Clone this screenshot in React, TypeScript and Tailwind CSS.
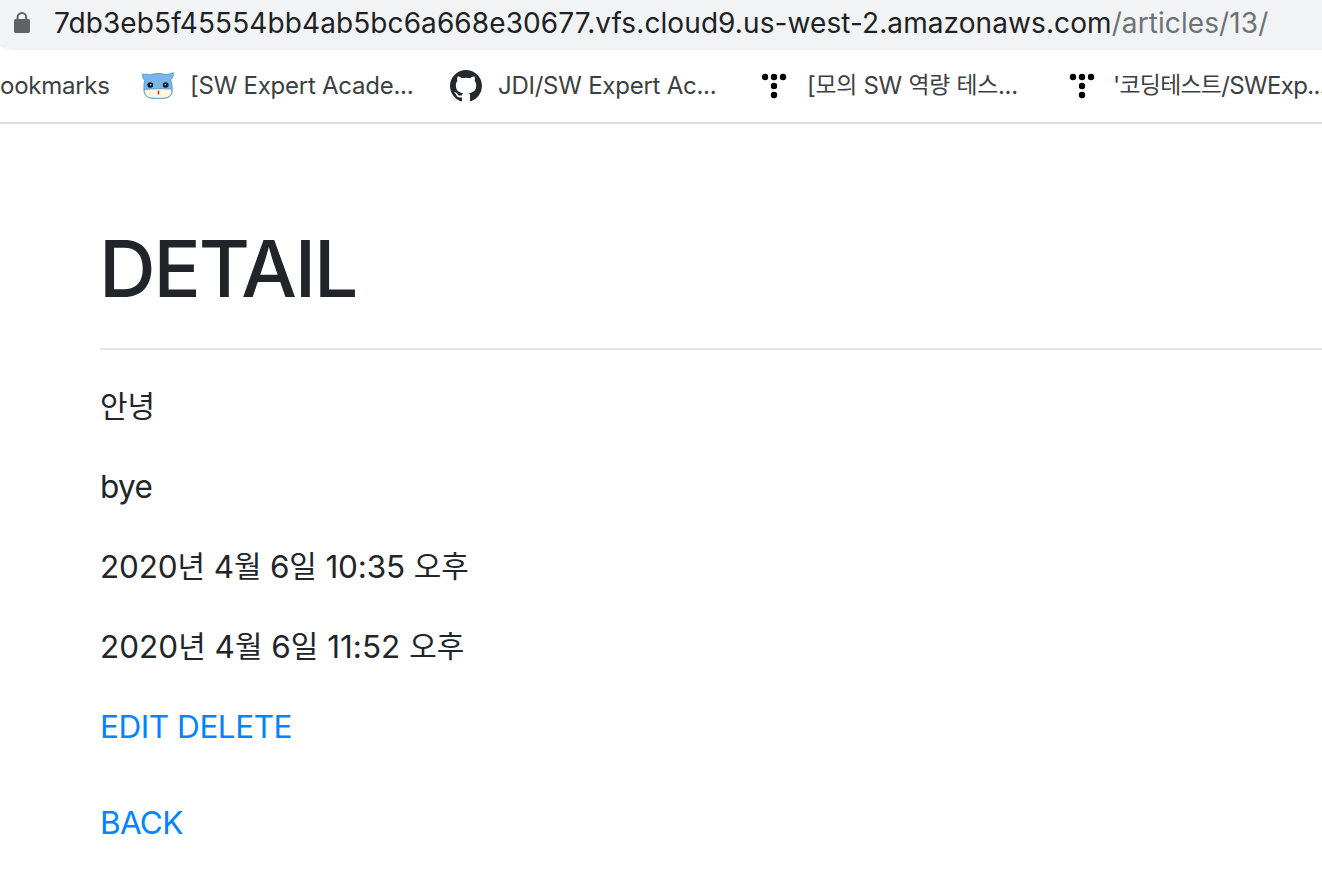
import type { ReactNode } from 'react';

function LockIcon() {
  return (
    <svg width="18" height="24" viewBox="0 0 18 24" className="shrink-0">
      <path d="M4.600 10V6.300a4.300 4.300 0 0 1 8.600 0V10" fill="none" stroke="#606164" strokeWidth="2" />
      <rect x="1" y="8" width="16" height="14" rx="1.8" fill="#606164" />
    </svg>
  );
}

function MascotIcon() {
  return (
    <svg width="32" height="28" viewBox="0 0 32 30" preserveAspectRatio="none" className="shrink-0">
      <path
        d="M.6 2.4C3 2.6 6 2.1 8 3.2c5-1.9 11-1.9 16-.3 2.300-.6 5-.9 7.200-2.200.5 3.200-.3 5.800-2.600 7.600 1.400 3.500 1.800 8 1.400 12.500-.4 5-4 7-8.500 7.300-4 .3-8 .3-12-.2-4.500-.6-7-3.400-7.400-8-.3-3.800-.2-7.600.7-11C.7 7.400.4 5 .6 2.400Z"
        fill="#78b7ea"
        stroke="#559bd8"
        strokeWidth="1"
      />
      <path
        d="M2.100 18.700c8.500-1 18.500-1 27.800-.5.400 6-2 9.300-8.400 9.900-4 .3-8 .3-12-.2-5-.6-7.500-4-7.400-9.200Z"
        fill="#fff8dc"
        stroke="#559bd8"
        strokeWidth="1"
      />
      <circle cx="8.300" cy="13.900" r="2.900" fill="#15161a" />
      <circle cx="23.700" cy="13.900" r="2.900" fill="#15161a" />
      <circle cx="8.700" cy="13.700" r=".8" fill="#fff" />
      <circle cx="23.400" cy="13.700" r=".8" fill="#fff" />
      <path d="M16.500 20v4" stroke="#d9232b" strokeWidth="1.500" />
    </svg>
  );
}

function GithubIcon() {
  return (
    <svg width="32" height="32" viewBox="0 0 16 16" className="shrink-0" fill="#24292e">
      <path d="M8 0C3.58 0 0 3.58 0 8c0 3.54 2.29 6.53 5.47 7.59.4.07.55-.17.55-.38 0-.19-.01-.82-.01-1.49-2.01.37-2.53-.49-2.69-.94-.09-.23-.48-.94-.82-1.13-.28-.15-.68-.52-.01-.53.63-.01 1.08.58 1.23.82.72 1.21 1.87.87 2.33.66.07-.52.28-.87.51-1.07-1.78-.2-3.64-.89-3.64-3.95 0-.87.31-1.59.82-2.15-.08-.2-.36-1.02.08-2.12 0 0 .67-.21 2.2.82.64-.18 1.32-.27 2-.27s1.36.09 2 .27c1.53-1.04 2.2-.82 2.2-.82.44 1.1.16 1.92.08 2.12.51.56.82 1.27.82 2.15 0 3.07-1.87 3.75-3.65 3.95.29.25.54.73.54 1.48 0 1.07-.01 1.93-.01 2.2 0 .21.15.46.55.38A8.01 8.01 0 0 0 16 8c0-4.42-3.58-8-8-8Z" />
    </svg>
  );
}

function DotsIcon() {
  return (
    <svg width="26" height="26" viewBox="0 0 26 26" className="shrink-0" fill="#000">
      <circle cx="4" cy="4" r="3.200" />
      <circle cx="13" cy="4" r="3.200" />
      <circle cx="22" cy="4" r="3.200" />
      <circle cx="13" cy="13" r="3.200" />
      <circle cx="13" cy="22" r="3.200" />
    </svg>
  );
}

/* Sets Hangul runs slightly smaller than the Latin text around them. */
function Mixed({ text }: { text: string }) {
  return (
    <span>
      {text.split(/([가-힣]+)/).map((part, i) =>
        i % 2 ? (
          <span key={i} className="align-[0.03em] text-[0.95em] leading-none">
            {part}
          </span>
        ) : (
          part
        ),
      )}
    </span>
  );
}

function Bookmark({ icon, className, title }: { icon: ReactNode; className: string; title: string }) {
  return (
    <a className={`flex shrink-0 items-center ${className}`}>
      {icon}
      <Mixed text={title} />
    </a>
  );
}

export default function App() {
  return (
    <div className="h-[886px] w-[1322px] overflow-hidden bg-white font-['Inter','Noto_Sans_CJK_KR',sans-serif] text-[#212529]">
      <header className="h-[124px] border-b-2 border-[#dadce0]">
        <div className="-ml-[11px] flex h-[50px] items-center rounded-bl-[25px] bg-[#f1f3f4] pb-1 pl-6 text-[28px] leading-8 tracking-[0.09px] whitespace-nowrap">
          <LockIcon />
          <span className="ml-[23px] text-[#202124]">7db3eb5f45554bb4ab5bc6a668e30677.vfs.cloud9.us-west-2.amazonaws.com</span>
          <span className="text-[#6f7275]">/articles/13/</span>
        </div>
        <nav className="flex h-[72px] items-center text-2xl tracking-[-0.25px] whitespace-nowrap text-[#3c4043]">
          <span className="w-[142px] shrink-0">ookmarks</span>
          <Bookmark icon={<MascotIcon />} className="w-[308px] gap-4" title="[SW Expert Acade..." />
          <Bookmark icon={<GithubIcon />} className="w-[311px] gap-4" title="JDI/SW Expert Ac..." />
          <Bookmark icon={<DotsIcon />} className="w-[308px] gap-5" title="[모의 SW 역량 테스..." />
          <Bookmark icon={<DotsIcon />} className="gap-[18px] tracking-[-0.65px]" title="'코딩테스트/SWExp..." />
        </nav>
      </header>
      <main className="pt-24 pl-[100px] text-[31.5px] leading-[48px]">
        <h1 className="-ml-px pt-0.5 text-[78.5px] leading-[94px] font-medium tracking-[-2.1px]">DETAIL</h1>
        <hr className="mt-8 mb-[33px] border-t-2 border-[#e5e5e5]" />
        <div className="flex flex-col gap-8">
          <p><Mixed text="안녕" /></p>
          <p className="tracking-[-0.6px]">bye</p>
          <p className="tracking-[-0.15px]"><Mixed text="2020년 4월 6일 10:35 오후" /></p>
          <p><Mixed text="2020년 4월 6일 11:52 오후" /></p>
          <p className="tracking-[-0.45px] text-[#0084ff]"><a>EDIT</a> <a>DELETE</a></p>
        </div>
        <a className="mt-12 block tracking-[-0.7px] text-[#0084ff]">BACK</a>
      </main>
    </div>
  );
}
